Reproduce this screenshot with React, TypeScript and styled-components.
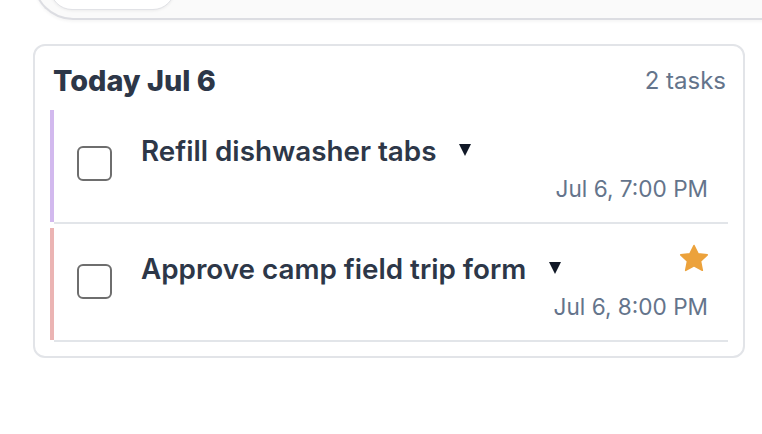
import React from "react";
import styled, { createGlobalStyle } from "styled-components";

const GlobalStyle = createGlobalStyle`
  * { box-sizing: border-box; }
  html, body { margin: 0; padding: 0; background: #ffffff; }
  body {
    font-family: Inter, "Noto Sans", "Liberation Sans", sans-serif;
    -webkit-font-smoothing: antialiased;
    overflow: hidden;
  }
`;

const Page = styled.div`
  width: 762px;
  padding-left: 33px;
  overflow: hidden;
`;

/* Filter bar above the list; its top part has scrolled away. */
const Toolbar = styled.div`
  height: 60px;
  margin-top: -40px;
  margin-right: -40px;
  background: #fafafa;
  border-left: 2px solid #dcdde2;
  border-bottom: 2px solid #dcdde2;
  border-bottom-left-radius: 40px;
  box-shadow: 0 2px 3px rgba(0, 0, 0, 0.04);
  display: flex;
  align-items: flex-end;
  padding: 0 0 8px 15px;
`;

const ToolbarPill = styled.div`
  width: 125px;
  height: 44px;
  background: #ffffff;
  border: 1.5px solid #e1e2e6;
  border-radius: 24px;
  box-shadow: 0 1px 3px rgba(0, 0, 0, 0.06);
`;

const Card = styled.section`
  width: 712px;
  margin-top: 24px;
  border: 2px solid #e2e4e8;
  border-radius: 12px;
  padding: 18px 15px 14px 15px;
`;

const CardHeader = styled.header`
  display: flex;
  align-items: center;
  justify-content: space-between;
  height: 32px;
  padding: 0 2px 0 3px;
  margin-bottom: 14px;
`;

const DayTitle = styled.h2`
  margin: 0;
  font-size: 28.8px;
  font-weight: 800;
  color: #2d3748;
`;

const TaskCount = styled.span`
  font-size: 24px;
  font-weight: 400;
  color: #64748b;
`;

const TaskList = styled.ul`
  list-style: none;
  margin: 0;
  padding: 0;
  display: flex;
  flex-direction: column;
  gap: 4px;
`;

const TaskRow = styled.li`
  display: flex;
  align-items: stretch;
`;

const Accent = styled.div<{ $color: string }>`
  width: 4px;
  margin-bottom: 2px;
  background: ${(p) => p.$color};
`;

const TaskBody = styled.div`
  flex: 1;
  display: flex;
  align-items: center;
  gap: 29px;
  padding: 16px 20px 21px 23px;
  border-bottom: 2px solid #e2e5e9;
`;

const Checkbox = styled.span`
  flex: none;
  width: 35px;
  height: 35px;
  border: 2px solid #6e6e6e;
  border-radius: 6px;
  background: #ffffff;
`;

const TaskContent = styled.div`
  flex: 1;
  display: flex;
  flex-direction: column;
`;

const TopLine = styled.div`
  display: flex;
  justify-content: space-between;
  align-items: flex-start;
  min-height: 39px;
`;

const TitleGroup = styled.div`
  display: flex;
  align-items: center;
  gap: 23px;
  margin-top: 11px;
  height: 28px;
`;

const TaskTitle = styled.span`
  font-size: 27.8px;
  font-weight: 600;
  line-height: 28px;
  color: #2d3748;
`;

const Caret = styled.span`
  width: 0;
  height: 0;
  border-left: 6px solid transparent;
  border-right: 6px solid transparent;
  border-top: 12px solid #111827;
  margin-top: -2px;
`;

const StarIcon = styled.svg`
  width: 30px;
  height: 30px;
  margin-right: -1px;
`;

const DueDate = styled.span`
  align-self: flex-end;
  margin-top: 12px;
  line-height: 24px;
  font-size: 22.6px;
  font-weight: 400;
  color: #64748b;
`;

type Task = {
  title: string;
  due: string;
  accent: string;
  starred?: boolean;
};

const tasks: Task[] = [
  { title: "Refill dishwasher tabs", due: "Jul 6, 7:00 PM", accent: "#d2b9ee" },
  {
    title: "Approve camp field trip form",
    due: "Jul 6, 8:00 PM",
    accent: "#ebb4b3",
    starred: true,
  },
];

const Star = () => (
  <StarIcon viewBox="0 0 30 30" aria-hidden="true">
    <polygon
      points="15,1.5 19.1,9.8 28.2,10.9 21.5,17.2 23.3,26.3 15,21.8 6.7,26.3 8.5,17.2 1.8,10.9 10.9,9.8"
      fill="#eca23c"
      stroke="#eca23c"
      strokeWidth="1.6"
      strokeLinejoin="round"
    />
  </StarIcon>
);

export default function App() {
  return (
    <>
      <GlobalStyle />
      <Page>
        <Toolbar>
          <ToolbarPill />
        </Toolbar>
        <Card>
          <CardHeader>
            <DayTitle>Today Jul 6</DayTitle>
            <TaskCount>{tasks.length} tasks</TaskCount>
          </CardHeader>
          <TaskList>
            {tasks.map((t) => (
              <TaskRow key={t.title}>
                <Accent $color={t.accent} />
                <TaskBody>
                  <Checkbox role="checkbox" aria-checked="false" />
                  <TaskContent>
                    <TopLine>
                      <TitleGroup>
                        <TaskTitle>{t.title}</TaskTitle>
                        <Caret />
                      </TitleGroup>
                      {t.starred && <Star />}
                    </TopLine>
                    <DueDate>{t.due}</DueDate>
                  </TaskContent>
                </TaskBody>
              </TaskRow>
            ))}
          </TaskList>
        </Card>
      </Page>
    </>
  );
}
